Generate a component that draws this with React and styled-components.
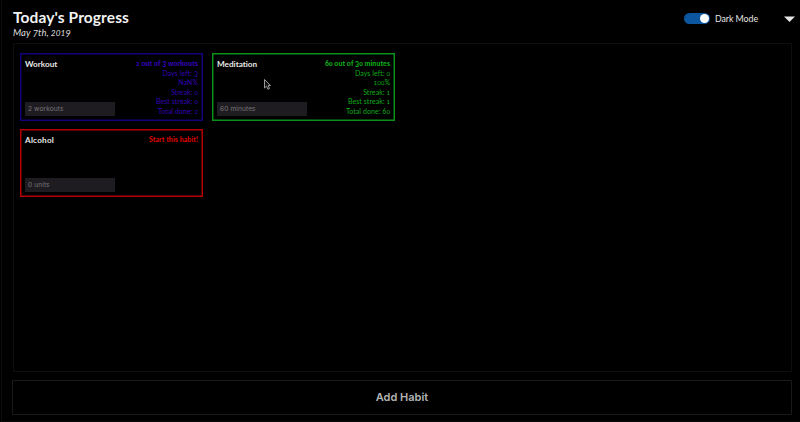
import React from "react";
import styled, { createGlobalStyle } from "styled-components";

const GlobalStyle = createGlobalStyle`
  * { box-sizing: border-box; }
  html, body { margin: 0; background: #000; overflow: hidden; }
  body { font-family: Lato, "Open Sans", sans-serif; color: #fff; }
`;

const Page = styled.main`
  display: flex;
  flex-direction: column;
  width: 799px;
  height: 422px;
  margin-left: 1px;
  padding: 8px 7px 6px 11px;
  border-left: 1px solid #0d0d0d;
  border-bottom: 1px solid #0a0a0a;
  background: #000;
`;

const Header = styled.header`
  display: flex;
  justify-content: space-between;
  height: 36px;
  margin-right: -2px;
`;

const Title = styled.h1`
  margin: 0;
  font-size: 15.5px;
  line-height: 18px;
  font-weight: 700;
  letter-spacing: 0.12px;
  white-space: nowrap;
  color: #f2f2f2;
`;

const DateLine = styled.div`
  font-size: 9.5px;
  line-height: 14px;
  font-style: italic;
  letter-spacing: 0.01px;
  white-space: nowrap;
  color: #ddd;
`;

const Controls = styled.div`
  display: flex;
  align-items: center;
  height: 21px;
`;

const Switch = styled.span`
  display: flex;
  justify-content: flex-end;
  width: 26px;
  height: 11px;
  padding: 1px;
  border-radius: 6px;
  background: #0b569f;
`;

const Knob = styled.span`
  width: 9px;
  height: 9px;
  border-radius: 50%;
  background: #fff;
`;

const SwitchLabel = styled.span`
  width: 69px;
  padding-left: 5px;
  font-size: 8.8px;
  letter-spacing: -0.05px;
  white-space: nowrap;
  color: #e6e6e6;
`;

const Board = styled.section`
  flex: none;
  display: grid;
  grid-template-columns: 183px 183px;
  grid-auto-rows: 68px;
  align-content: start;
  gap: 8px 9px;
  width: 779px;
  height: 329px;
  padding: 9px 6px;
  border: 1px solid #0e0e0e;
`;

const Card = styled.article`
  display: flex;
  justify-content: space-between;
  padding: 4px 4px 4px 4px;
  border: 1px solid ${(p) => p.$color};
  box-shadow: inset 0 0 0 0.5px ${(p) => p.$color};
`;

const CardMain = styled.div`
  display: flex;
  flex-direction: column;
  justify-content: space-between;
`;

const HabitName = styled.h2`
  margin: 0;
  font-size: 8.2px;
  line-height: 12px;
  font-weight: 700;
  letter-spacing: ${(p) => p.$track}px;
  color: #e8e8e8;
`;

const Amount = styled.div`
  width: 90px;
  height: 14px;
  padding-left: 3px;
  font: 6.6px/15px Inter, sans-serif;
  letter-spacing: 0.1px;
  color: #77777a;
  background: #1e1c20;
`;

const Stats = styled.div`
  display: flex;
  flex-direction: column;
  align-items: flex-end;
  padding-top: 1px;
  color: ${(p) => p.$color};
`;

const Stat = styled.div`
  height: 9.55px;
  margin-right: ${(p) => -p.$track}px;
  font-size: 7px;
  line-height: 9.55px;
  font-weight: ${(p) => (p.$strong ? 900 : 400)};
  letter-spacing: ${(p) => p.$track}px;
  white-space: nowrap;
`;

/* Old-style figures: 0-2 at x-height, 3/4/5/7/9 hanging below the baseline. */
const SmallDigit = styled.span`
  font-size: 0.87em;
  line-height: 0;
`;

const LowDigit = styled.span`
  line-height: 0;
  vertical-align: -0.14em;
`;

const AddButton = styled.button`
  flex: none;
  width: 780px;
  height: 35px;
  margin: 8px 0 0 -1px;
  padding: 0;
  border: 1px solid #1a1a1a;
  border-radius: 1px;
  background: #000;
  color: #b3b3b3;
  font: 600 11px/33px Inter, sans-serif;
`;

const Pointer = styled.svg`
  position: absolute;
  left: 263px;
  top: 78px;
`;

const Figures = ({ children }) =>
  children.split(/(\d)/).map((part, i) => {
    if (/^[012]$/.test(part)) return <SmallDigit key={i}>{part}</SmallDigit>;
    if (/^[34579]$/.test(part)) return <LowDigit key={i}>{part}</LowDigit>;
    return part;
  });

const habits = [
  {
    name: "Workout",
    track: 0,
    amount: "2 workouts",
    border: "#150078",
    color: "#3300b8",
    stats: ["2 out of 3 workouts", "Days left: 3", "NaN%", "Streak: 0", "Best streak: 0", "Total done: 2"],
  },
  {
    name: "Meditation",
    track: -0.02,
    amount: "60 minutes",
    border: "#0b8f18",
    color: "#0eac18",
    stats: ["60 out of 30 minutes", "Days left: 0", "100%", "Streak: 1", "Best streak: 1", "Total done: 60"],
  },
  {
    name: "Alcohol",
    track: 0.2,
    amount: "0 units",
    border: "#b40000",
    color: "#d80000",
    stats: ["Start this habit!"],
  },
];

export default function App() {
  return (
    <>
      <GlobalStyle />
      <Page>
        <Header>
          <div>
            <Title>Today's Progress</Title>
            <DateLine>
              <Figures>May 7th, 2019</Figures>
            </DateLine>
          </div>
          <Controls>
            <Switch>
              <Knob />
            </Switch>
            <SwitchLabel>Dark Mode</SwitchLabel>
            <svg width="16" height="10" viewBox="0 0 16 10">
              <path d="M5 2.5H16L10.5 8Z" fill="#e4e4e4" />
            </svg>
          </Controls>
        </Header>
        <Board>
          {habits.map((h) => (
            <Card key={h.name} $color={h.border}>
              <CardMain>
                <HabitName $track={h.track}>{h.name}</HabitName>
                <Amount>{h.amount}</Amount>
              </CardMain>
              <Stats $color={h.color}>
                {h.stats.map((s, i) => (
                  <Stat key={s} $strong={i === 0} $track={i === 0 ? 0.06 : 0.06}>
                    <Figures>{s}</Figures>
                  </Stat>
                ))}
              </Stats>
            </Card>
          ))}
        </Board>
        <AddButton>Add Habit</AddButton>
      </Page>
      <Pointer width="9" height="13" viewBox="0 0 9 13">
        <path d="M1.5 1.5V10L3.5 8.2L5 11.3L6.5 10.5L5.2 7.5H7.5Z" fill="#111" stroke="#aaa" strokeWidth="0.9" />
      </Pointer>
    </>
  );
}
